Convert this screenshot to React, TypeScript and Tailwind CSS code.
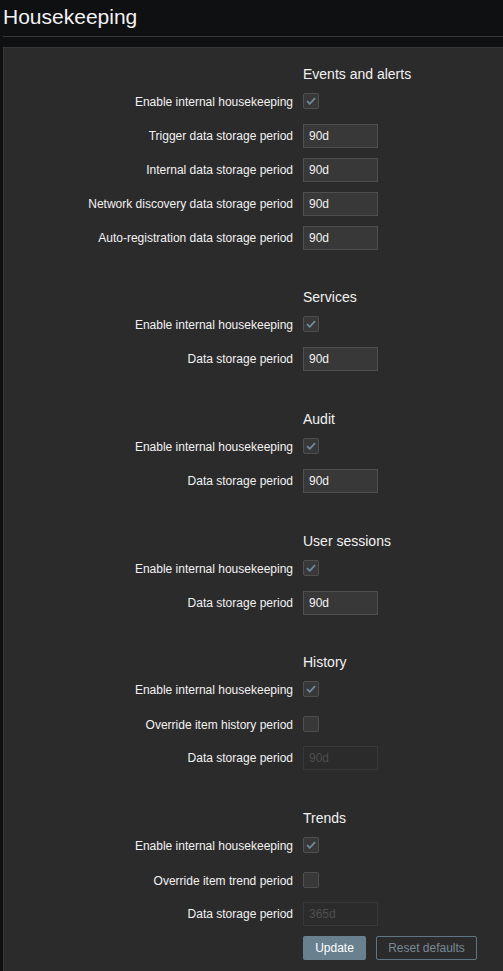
import React from 'react';

type Field =
  | { kind: 'check'; label: string; checked: boolean }
  | { kind: 'input'; label: string; value: string; disabled?: boolean };

interface Section {
  title: string;
  spacing: string;
  fields: Field[];
}

const sections: Section[] = [
  {
    title: 'Events and alerts',
    spacing: '',
    fields: [
      { kind: 'check', label: 'Enable internal housekeeping', checked: true },
      { kind: 'input', label: 'Trigger data storage period', value: '90d' },
      { kind: 'input', label: 'Internal data storage period', value: '90d' },
      { kind: 'input', label: 'Network discovery data storage period', value: '90d' },
      { kind: 'input', label: 'Auto-registration data storage period', value: '90d' },
    ],
  },
  {
    title: 'Services',
    spacing: 'mt-[32px]',
    fields: [
      { kind: 'check', label: 'Enable internal housekeeping', checked: true },
      { kind: 'input', label: 'Data storage period', value: '90d' },
    ],
  },
  {
    title: 'Audit',
    spacing: 'mt-[33px]',
    fields: [
      { kind: 'check', label: 'Enable internal housekeeping', checked: true },
      { kind: 'input', label: 'Data storage period', value: '90d' },
    ],
  },
  {
    title: 'User sessions',
    spacing: 'mt-[33px]',
    fields: [
      { kind: 'check', label: 'Enable internal housekeeping', checked: true },
      { kind: 'input', label: 'Data storage period', value: '90d' },
    ],
  },
  {
    title: 'History',
    spacing: 'mt-[32px]',
    fields: [
      { kind: 'check', label: 'Enable internal housekeeping', checked: true },
      { kind: 'check', label: 'Override item history period', checked: false },
      { kind: 'input', label: 'Data storage period', value: '90d', disabled: true },
    ],
  },
  {
    title: 'Trends',
    spacing: 'mt-[33px]',
    fields: [
      { kind: 'check', label: 'Enable internal housekeeping', checked: true },
      { kind: 'check', label: 'Override item trend period', checked: false },
      { kind: 'input', label: 'Data storage period', value: '365d', disabled: true },
    ],
  },
];

function Checkbox({ checked }: { checked: boolean }) {
  return (
    <span className="w-[16px] h-[16px] border border-[#4f4f4f] bg-[#383838] rounded-[2px] flex items-center justify-center">
      {checked && (
        <svg width="10" height="8" viewBox="0 0 10 8" fill="none">
          <path d="M1 4.2 L3.8 6.8 L9 1.2" stroke="#6f8b9b" strokeWidth="1.8" />
        </svg>
      )}
    </span>
  );
}

function Row({ field, first }: { field: Field; first: boolean }) {
  const label = (
    <div className="w-[299px] shrink-0 pr-[10px] text-right text-[12px] text-[#f2f2f2]">{field.label}</div>
  );

  if (field.kind === 'check') {
    return (
      <div className={`flex ${first ? 'h-[35px]' : 'h-[34px]'}`}>
        <div className="flex items-start pt-[9px]">{label}</div>
        <div className="pt-[9px]">
          <Checkbox checked={field.checked} />
        </div>
      </div>
    );
  }

  return (
    <div className="flex h-[34px] items-center">
      {label}
      <div
        className={`w-[75px] h-[24px] border px-[5px] flex items-center text-[12px] ${
          field.disabled
            ? 'border-[#383838] bg-[#2b2b2b] text-[#4f4f4f]'
            : 'border-[#4f4f4f] bg-[#383838] text-[#f2f2f2]'
        }`}
      >
        {field.value}
      </div>
    </div>
  );
}

export default function App() {
  return (
    <div
      className="min-h-[971px] bg-[#0e1012] pl-[3px] overflow-hidden"
      style={{ fontFamily: '"Liberation Sans", Arial, sans-serif' }}
    >
      <div className="h-[37px] border-b border-[#383838] flex items-start">
        <h1 className="text-[21px] leading-[24px] pt-[5px] text-[#f2f2f2]">Housekeeping</h1>
      </div>

      <div className="mt-[10px] bg-[#2b2b2b] border-l border-t border-[#383838] pt-[16px] pb-[20px] min-h-[924px]">
        {sections.map((s) => (
          <div key={s.title} className={s.spacing}>
            <div className="flex h-[20px] items-center">
              <div className="w-[299px] shrink-0" />
              <h4 className="text-[14px] text-[#f2f2f2]">{s.title}</h4>
            </div>
            {s.fields.map((f, j) => (
              <Row key={j} field={f} first={j === 0} />
            ))}
          </div>
        ))}

        <div className="flex h-[34px] items-center">
          <div className="w-[299px] shrink-0" />
          <div className="flex gap-[10px]">
            <button className="h-[24px] w-[63px] bg-[#69818e] text-[#ffffff] text-[12px] rounded-[2px]">
              Update
            </button>
            <button className="h-[24px] w-[101px] border border-[#5f7783] text-[#778a95] text-[12px] rounded-[2px]">
              Reset defaults
            </button>
          </div>
        </div>
      </div>
    </div>
  );
}
